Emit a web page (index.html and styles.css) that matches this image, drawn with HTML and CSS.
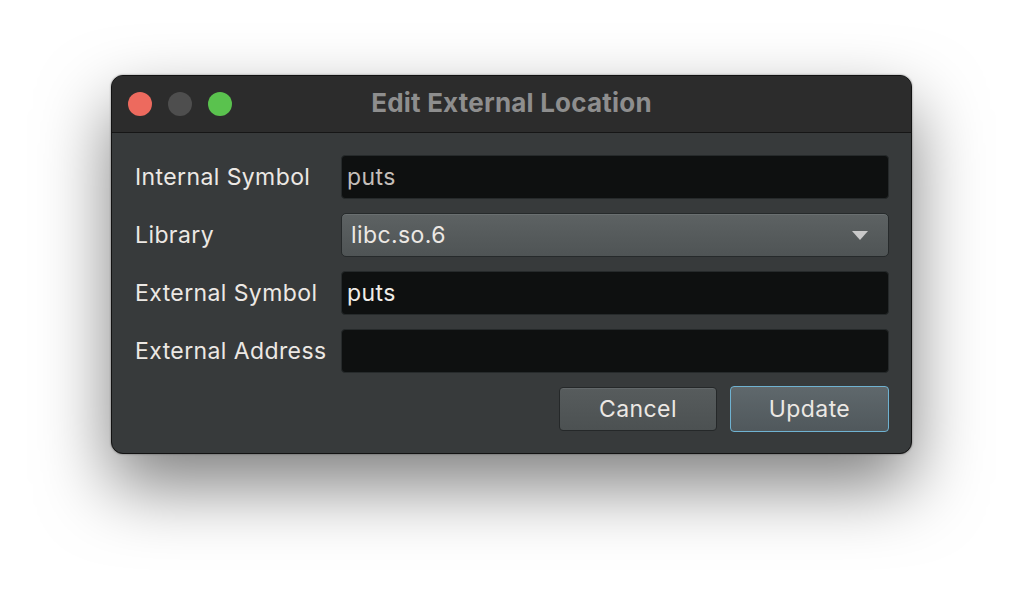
FILE: index.html
```html
<!DOCTYPE html>
<html>
<head>
<meta charset="utf-8">
<link rel="stylesheet" href="styles.css">
</head>
<body>
<div class="window">
  <div class="titlebar">
    <div class="lights">
      <span class="light red"></span>
      <span class="light grey"></span>
      <span class="light green"></span>
    </div>
    <div class="title">Edit External Location</div>
  </div>
  <div class="content">
    <div class="form">
      <label class="label">Internal Symbol</label>
      <div class="field dim">puts</div>
      <label class="label">Library</label>
      <div class="combo"><span>libc.so.6</span>
        <svg class="arrow" width="16" height="9" viewBox="0 0 16 9"><path d="M0 0H16L8 9Z" fill="#c9c9c9"/></svg>
      </div>
      <label class="label">External Symbol</label>
      <div class="field">puts</div>
      <label class="label">External Address</label>
      <div class="field"></div>
    </div>
    <div class="buttons">
      <button class="btn">Cancel</button>
      <button class="btn default">Update</button>
    </div>
  </div>
</div>
</body>
</html>
```
FILE: styles.css
```css
html, body {
  margin: 0;
  padding: 0;
  background: #ffffff;
  width: 1024px;
  height: 602px;
  overflow: hidden;
}
body {
  font-family: Inter, "Liberation Sans", sans-serif;
  padding: 75px 0 0 111px;
  box-sizing: border-box;
}
.window {
  width: 801px;
  height: 379px;
  border-radius: 12px;
  background: #373a3b;
  border: 1px solid #121212;
  box-sizing: border-box;
  overflow: hidden;
  box-shadow: 0 32px 70px rgba(0,0,0,0.5), 0 0 2px rgba(0,0,0,0.5);
  display: flex;
  flex-direction: column;
}
.titlebar {
  height: 56px;
  background: #2c2c2c;
  border-bottom: 1px solid #161616;
  display: flex;
  align-items: center;
  position: relative;
  flex-shrink: 0;
}
.lights {
  display: flex;
  gap: 16px;
  padding-left: 16px;
}
.light {
  width: 24px;
  height: 24px;
  border-radius: 50%;
  display: block;
}
.red { background: #ed6a5e; }
.grey { background: #4e4e4e; }
.green { background: #5ac24e; }
.title {
  position: absolute;
  left: 0;
  right: 0;
  top: 11px;
  text-align: center;
  font-weight: 700;
  font-size: 26px;
  letter-spacing: 0.2px;
  color: #8e8e8e;
}
.content {
  padding: 22px 22px 0 23px;
  display: flex;
  flex-direction: column;
}
.form {
  display: grid;
  grid-template-columns: 206px 1fr;
  row-gap: 14px;
  align-items: center;
}
.label {
  font-size: 23px;
  letter-spacing: 0.4px;
  color: #ece8e4;
}
.field {
  height: 44px;
  background: #0e1010;
  border: 1px solid #262a2b;
  border-radius: 4px;
  box-sizing: border-box;
  padding: 0 5px;
  display: flex;
  align-items: center;
  font-size: 23px;
  letter-spacing: 0.4px;
  color: #f0ece8;
}
.field.dim { color: #c4beb9; }
.combo {
  height: 44px;
  box-sizing: border-box;
  border: 1px solid #262a2b;
  border-radius: 5px;
  background: linear-gradient(#5d6263, #4f5455);
  box-shadow: inset 0 1px 0 #6a6f70;
  padding: 0 20px 0 9px;
  display: flex;
  align-items: center;
  justify-content: space-between;
  font-size: 23px;
  letter-spacing: 0.4px;
  color: #ece8e4;
}
.buttons {
  display: flex;
  justify-content: flex-end;
  gap: 13px;
  margin-top: 14px;
}
.btn {
  font-family: inherit;
  width: 158px;
  height: 44px;
  border-radius: 4px;
  border: 1px solid #252829;
  background: linear-gradient(#575c5d, #4c5152);
  box-shadow: inset 0 1px 0 #63686a;
  color: #ece8e4;
  font-size: 23px;
  letter-spacing: 0.4px;
  padding: 0;
}
.btn.default {
  width: 159px;
  height: 46px;
  border: 1px solid #6fb2d1;
  background: linear-gradient(#5f686c, #50585c);
  margin-top: -1px;
}
```
